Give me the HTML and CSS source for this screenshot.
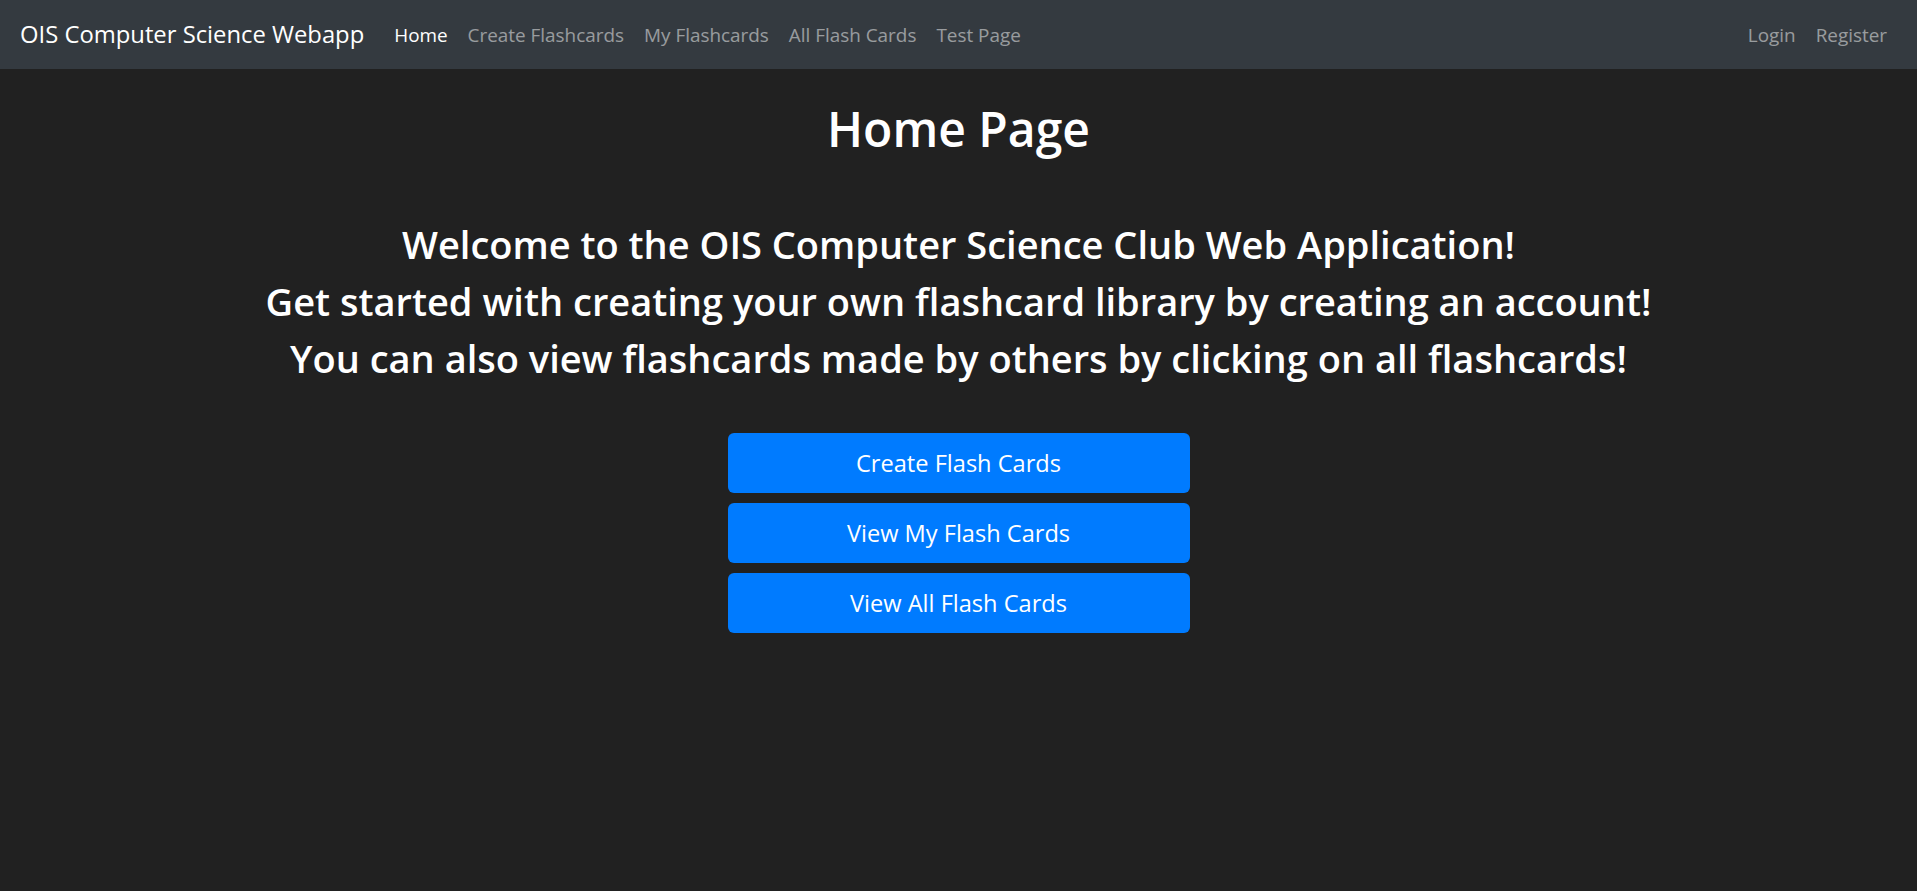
FILE: index.html
```html
<!DOCTYPE html>
<html lang="en">
<head>
<meta charset="utf-8">
<title>OIS Computer Science Webapp</title>
<link rel="stylesheet" href="styles.css">
</head>
<body>
<nav class="navbar">
  <a class="brand" href="#">OIS Computer Science Webapp</a>
  <ul class="nav-list">
    <li><a class="nav-link active" href="#">Home</a></li>
    <li><a class="nav-link" href="#">Create Flashcards</a></li>
    <li><a class="nav-link" href="#">My Flashcards</a></li>
    <li><a class="nav-link" href="#">All Flash Cards</a></li>
    <li><a class="nav-link" href="#">Test Page</a></li>
  </ul>
  <ul class="nav-list nav-right">
    <li><a class="nav-link" href="#">Login</a></li>
    <li><a class="nav-link" href="#">Register</a></li>
  </ul>
</nav>
<main class="content">
  <h1 class="title">Home Page</h1>
  <div class="intro">
    <h2 class="intro-line">Welcome to the OIS Computer Science Club Web Application!</h2>
    <h2 class="intro-line">Get started with creating your own flashcard library by creating an account!</h2>
    <h2 class="intro-line">You can also view flashcards made by others by clicking on all flashcards!</h2>
  </div>
  <div class="actions">
    <a class="btn" href="#">Create Flash Cards</a>
    <a class="btn" href="#">View My Flash Cards</a>
    <a class="btn" href="#">View All Flash Cards</a>
  </div>
</main>
</body>
</html>
```
FILE: styles.css
```css
* { box-sizing: border-box; }
html, body {
  margin: 0;
  padding: 0;
}
body {
  background: #212121;
  color: #fff;
  font-family: "Open Sans", "Noto Sans", "Liberation Sans", sans-serif;
  height: 891px;
  overflow: hidden;
}
a { text-decoration: none; }

.navbar {
  display: flex;
  align-items: center;
  height: 69px;
  padding: 0 20px;
  background: #343a40;
}
.brand {
  color: #fff;
  font-size: 23.8px;
  line-height: 37px;
  margin-right: 20px;
  white-space: nowrap;
}
.nav-list {
  display: flex;
  list-style: none;
  margin: 0;
  padding: 0;
}
.nav-right { margin-left: auto; }
.nav-link {
  display: block;
  padding: 10px 10px;
  font-size: 18.9px;
  line-height: 30px;
  color: rgba(255, 255, 255, 0.5);
  white-space: nowrap;
}
.nav-link.active { color: #fff; }

.content {
  display: flex;
  flex-direction: column;
  align-items: center;
  padding-top: 30px;
}
.title {
  margin: 0 0 57px;
  font-size: 48px;
  line-height: 60px;
  font-weight: 600;
}
.intro {
  display: flex;
  flex-direction: column;
  align-items: center;
  margin-bottom: 46px;
}
.intro-line {
  margin: 0;
  font-size: 38px;
  line-height: 57px;
  font-weight: 600;
  text-align: center;
}
.actions {
  display: flex;
  flex-direction: column;
  gap: 10px;
  width: 462px;
}
.btn {
  display: block;
  height: 60px;
  line-height: 60px;
  text-align: center;
  background: #007bff;
  color: #fff;
  font-size: 23.6px;
  border-radius: 6px;
}
```
